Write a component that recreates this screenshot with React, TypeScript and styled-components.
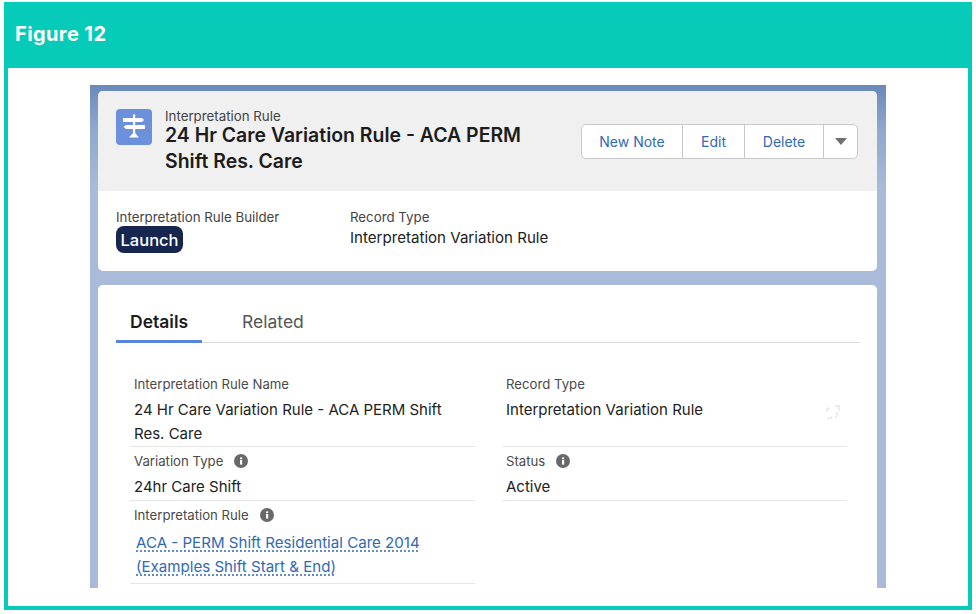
import styled, { createGlobalStyle } from "styled-components";

const GlobalStyle = createGlobalStyle`
  html, body {
    margin: 0;
    padding: 0;
    background: #fff;
  }
  body {
    font-family: Inter, "Liberation Sans", sans-serif;
  }
`;

const InfoIcon = () => (
  <svg width="14" height="14" viewBox="0 0 14 14">
    <circle cx="7" cy="7" r="7" fill="#696969" />
    <rect x="6" y="6" width="2.2" height="4.6" fill="#fff" />
    <rect x="6" y="3.4" width="2.2" height="1.8" fill="#fff" />
  </svg>
);

const SignpostIcon = () => (
  <svg width="36" height="36" viewBox="0 0 36 36">
    <rect x="17" y="5.5" width="2.2" height="20" fill="#fff" />
    <path d="M7 9h19l2 2-2 2H7z" fill="#fff" />
    <path d="M29 16H10l-2.500 2 2.500 2h19z" fill="#fff" />
    <path d="M18 23l5 5.500H13z" fill="#fff" />
  </svg>
);

const SyncIcon = () => (
  <svg width="16" height="16" viewBox="0 0 16 16" fill="none" stroke="#ececec" strokeWidth="2">
    <path d="M2 8V5l3-1" />
    <path d="M10 2h4v5" />
    <path d="M2 14h4l1-2" />
    <path d="M12 8v3l-2 3" />
  </svg>
);

const Page = styled.div`
  box-sizing: border-box;
  width: 976px;
  height: 614px;
  padding: 2px 4px 4px;
`;

const Frame = styled.section`
  box-sizing: border-box;
  height: 608px;
  display: flex;
  flex-direction: column;
  border: 4px solid #06cbb8;
  border-top: 0;
`;

const FigureBar = styled.header`
  height: 66px;
  flex: none;
  margin: 0 -1px;
  padding: 0 0 2px 8px;
  box-sizing: border-box;
  display: flex;
  align-items: center;
  background: #06cbb8;
  color: #fff;
  font-size: 20px;
  font-weight: 700;
  letter-spacing: 0.4px;
`;

const FigureBody = styled.div`
  flex: 1;
  min-height: 0;
  padding: 17px 82px 18px;
  display: flex;
`;

const Shot = styled.div`
  flex: 1;
  overflow: hidden;
  padding: 6px 9px 0 8px;
  background: linear-gradient(#6a89ba 0, #8fa8cd 45px, #a9bbd8 105px);
`;

const HeaderCard = styled.div`
  border-radius: 5px;
  overflow: hidden;
  background: #fff;
  margin-bottom: 14px;
`;

const HeaderTop = styled.div`
  box-sizing: border-box;
  height: 100px;
  padding: 18px 19px 0 18px;
  display: flex;
  background: #f0f0f0;
`;

const ObjectIcon = styled.div`
  width: 36px;
  height: 36px;
  flex: none;
  border-radius: 4px;
  background: #6b90dc;
  margin-right: 13px;
`;

const TitleBlock = styled.div`
  width: 400px;
`;

const ObjectName = styled.div`
  font-size: 13.300px;
  line-height: 15px;
  margin-bottom: -2px;
  color: #444;
`;

const RecordTitle = styled.h1`
  margin: 0;
  font-size: 19.450px;
  line-height: 26px;
  font-weight: 600;
  color: #1c1c1c;
`;

const ButtonGroup = styled.div`
  margin: 15px 0 0 auto;
  height: 35px;
  box-sizing: border-box;
  display: flex;
  background: #fff;
  border: 1px solid #c9c9c9;
  border-radius: 5px;
`;

const ActionButton = styled.button<{ $w: number }>`
  box-sizing: border-box;
  width: ${({ $w }) => $w}px;
  padding: 0;
  border: 0;
  border-left: 1px solid #c9c9c9;
  background: none;
  display: flex;
  align-items: center;
  justify-content: center;
  font-family: inherit;
  font-size: 14px;
  color: #2f6ab5;

  &:first-child {
    border-left: 0;
  }
`;

const Caret = styled.span`
  width: 0;
  height: 0;
  border-left: 6px solid transparent;
  border-right: 6px solid transparent;
  border-top: 7px solid #707070;
`;

const HeaderMeta = styled.div`
  box-sizing: border-box;
  height: 80px;
  padding: 17px 18px 0;
  display: flex;
`;

const MetaItem = styled.div<{ $w: number }>`
  width: ${({ $w }) => $w}px;
`;

const MetaLabel = styled.div`
  font-size: 13.300px;
  line-height: 18px;
  color: #444;
`;

const MetaValue = styled.div`
  font-size: 15.100px;
  line-height: 24px;
  color: #222;
`;

const LaunchButton = styled.button`
  display: block;
  box-sizing: border-box;
  width: 67px;
  height: 27px;
  padding: 0;
  border: 0;
  border-radius: 8px;
  background: #16264f;
  color: #fff;
  font-family: inherit;
  font-size: 16.500px;
  font-weight: 500;
`;

const DetailCard = styled.div`
  flex: 1;
  padding: 0 17px 0 18px;
  border-radius: 5px 5px 0 0;
  background: #fff;
  height: 320px;
`;

const Tabs = styled.nav`
  box-sizing: border-box;
  height: 58px;
  padding-top: 16px;
  display: flex;
  gap: 26px;
  border-bottom: 1px solid #dcdcdc;
`;

const Tab = styled.div<{ $active?: boolean }>`
  box-sizing: border-box;
  height: 42px;
  padding: 1px 14px 0;
  display: flex;
  align-items: center;
  font-size: 17.500px;
  font-weight: ${({ $active }) => ($active ? 600 : 400)};
  color: ${({ $active }) => ($active ? "#1c1c1c" : "#555")};
  border-bottom: 3px solid ${({ $active }) => ($active ? "#5585dc" : "transparent")};
`;

const FieldGrid = styled.div`
  display: grid;
  grid-template-columns: 345px 345px;
  column-gap: 27px;
  margin: 32px 0 0 14px;
`;

const Field = styled.div<{ $first?: boolean; $pad?: number }>`
  position: relative;
  padding: ${({ $first, $pad }) => `${$first ? 0 : 5}px 4px ${$pad ?? 0}px`};
  border-bottom: 1px solid #e6e6e6;
`;

const FieldLabel = styled.div`
  height: 18px;
  display: flex;
  align-items: center;
  gap: 11px;
  font-size: 13.200px;
  line-height: 18px;
  color: #4a4a4a;
`;

const FieldValue = styled.div`
  margin-top: 5px;
  font-size: 15px;
  line-height: 24px;
  color: #222;
`;

const FieldLink = styled.a`
  display: block;
  margin: 7px 0 0 2px;
  font-size: 15.100px;
  line-height: 24px;
  color: #2f6ab5;

  span {
    text-decoration: underline dotted #2f6ab5;
    text-underline-offset: 3px;
  }
`;

const SyncMark = styled.span`
  position: absolute;
  right: 6px;
  top: 29px;
`;

const App = () => {
  return (
    <>
      <GlobalStyle />
      <Page>
        <Frame>
          <FigureBar>Figure 12</FigureBar>
          <FigureBody>
            <Shot>
              <HeaderCard>
                <HeaderTop>
                  <ObjectIcon>
                    <SignpostIcon />
                  </ObjectIcon>
                  <TitleBlock>
                    <ObjectName>Interpretation Rule</ObjectName>
                    <RecordTitle>24 Hr Care Variation Rule - ACA PERM Shift Res. Care</RecordTitle>
                  </TitleBlock>
                  <ButtonGroup>
                    <ActionButton $w={100}>New Note</ActionButton>
                    <ActionButton $w={62}>Edit</ActionButton>
                    <ActionButton $w={79}>Delete</ActionButton>
                    <ActionButton $w={34}>
                      <Caret />
                    </ActionButton>
                  </ButtonGroup>
                </HeaderTop>
                <HeaderMeta>
                  <MetaItem $w={234}>
                    <MetaLabel>Interpretation Rule Builder</MetaLabel>
                    <LaunchButton>Launch</LaunchButton>
                  </MetaItem>
                  <MetaItem $w={300}>
                    <MetaLabel>Record Type</MetaLabel>
                    <MetaValue>Interpretation Variation Rule</MetaValue>
                  </MetaItem>
                </HeaderMeta>
              </HeaderCard>
              <DetailCard>
                <Tabs>
                  <Tab $active>Details</Tab>
                  <Tab>Related</Tab>
                </Tabs>
                <FieldGrid>
                  <Field $first>
                    <FieldLabel>Interpretation Rule Name</FieldLabel>
                    <FieldValue>
                      24 Hr Care Variation Rule - ACA PERM Shift
                      <br />
                      Res. Care
                    </FieldValue>
                  </Field>
                  <Field $first>
                    <FieldLabel>Record Type</FieldLabel>
                    <FieldValue>Interpretation Variation Rule</FieldValue>
                    <SyncMark>
                      <SyncIcon />
                    </SyncMark>
                  </Field>
                  <Field $pad={1}>
                    <FieldLabel>
                      Variation Type <InfoIcon />
                    </FieldLabel>
                    <FieldValue>24hr Care Shift</FieldValue>
                  </Field>
                  <Field $pad={1}>
                    <FieldLabel>
                      Status <InfoIcon />
                    </FieldLabel>
                    <FieldValue>Active</FieldValue>
                  </Field>
                  <Field $pad={4}>
                    <FieldLabel>
                      Interpretation Rule <InfoIcon />
                    </FieldLabel>
                    <FieldLink>
                      <span>ACA - PERM Shift Residential Care 2014</span>
                      <br />
                      <span>(Examples Shift Start &amp; End)</span>
                    </FieldLink>
                  </Field>
                </FieldGrid>
              </DetailCard>
            </Shot>
          </FigureBody>
        </Frame>
      </Page>
    </>
  );
};

export default App;
